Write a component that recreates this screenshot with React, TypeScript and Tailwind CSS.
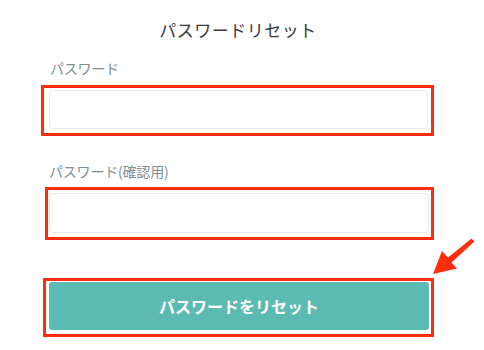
import React from "react";

const jp = { fontFamily: '"Noto Sans CJK JP", "Noto Sans", sans-serif' };

export default function App() {
  return (
    <div className="relative w-[484px] h-[350px] bg-white overflow-hidden" style={jp}>
      <div className="flex flex-col">
        <h1 className="ml-[42px] w-[392px] pt-[18px] text-center text-[17px] leading-[24px] font-normal text-[#3a3a3a] tracking-[0.5px]">
          パスワードリセット
        </h1>

        <label className="ml-[50px] mt-[17px] text-[14px] leading-[18px] tracking-[-0.2px] text-[#7d8e95]">
          パスワード
        </label>
        <div className="ml-[41px] mt-[8px] w-[393px] h-[51px] border-[3px] border-[#ff2d0d] pl-[5px] pr-[3px] pt-[2px] pb-[4px]">
          <input
            type="password"
            className="block w-full h-full rounded-[4px] border border-[#e6e8ee] bg-white outline-none"
          />
        </div>

        <label className="ml-[49px] mt-[26px] text-[14px] leading-[18px] tracking-[-0.2px] text-[#7d8e95]">
          パスワード(確認用)
        </label>
        <div className="ml-[45px] mt-[7px] w-[389px] h-[53px] border-[3px] border-[#ff2d0d] pl-[1px] pr-[2px] pt-[3px] pb-[4px]">
          <input
            type="password"
            className="block w-full h-full rounded-[4px] border border-[#e6e8ee] bg-white outline-none"
          />
        </div>

        <div className="ml-[43px] mt-[38px] w-[391px] h-[59px] border-[3px] border-[#ff2d0d] pl-[3px] pr-[2px] pt-[1px] pb-[4px]">
          <button className="w-full h-full rounded-[3px] bg-[#5bbbb3] text-white text-[16px] font-bold">
            パスワードをリセット
          </button>
        </div>
      </div>

      <svg className="absolute left-0 top-0" width="484" height="350" viewBox="0 0 484 350">
        <polygon
          points="433,274 457,268.5 451.5,262.5 474.5,241.5 471.5,238.5 448,257.5 442,251"
          fill="#ff2d0d"
        />
      </svg>
    </div>
  );
}
